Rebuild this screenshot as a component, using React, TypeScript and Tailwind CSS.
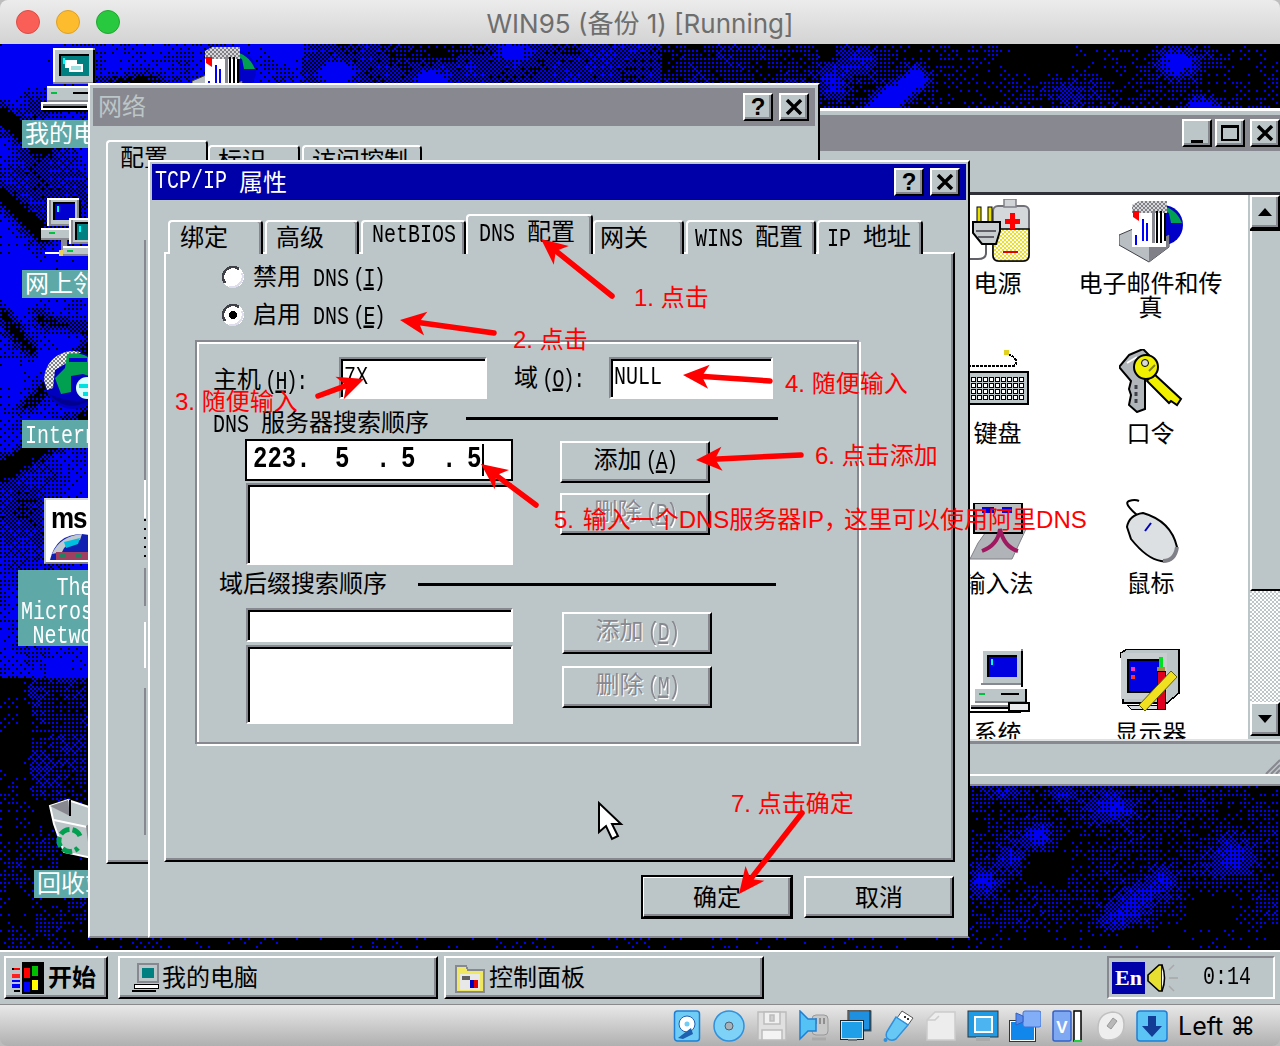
import React from "react";

type P = [number, number, number, number, string];
const G = "#bcc5c7", D = "#888890", K = "#000000", W = "#ffffff";

const Pix = ({ w, h, px = 2, data, extra }: { w: number; h: number; px?: number; data: P[]; extra?: React.ReactNode }) => (
  <svg width={w * px} height={h * px} viewBox={`0 0 ${w} ${h}`} shapeRendering="crispEdges" className="block shrink-0">
    {data.map((r, i) => (
      <rect key={i} x={r[0]} y={r[1]} width={r[2]} height={r[3]} fill={r[4]} />
    ))}
    {extra}
  </svg>
);

const pcData = (scr: string): P[] => [
  [6, 0, 21, 18, D], [6, 0, 20, 17, W], [7, 1, 19, 16, G], [9, 3, 15, 11, K], [10, 4, 14, 10, scr], [11, 5, 1, 3, "#00ffff"],
  [26, 1, 1, 18, K], [3, 19, 25, 8, G], [3, 19, 25, 1, W], [3, 26, 25, 1, D], [28, 20, 1, 7, K], [5, 22, 3, 1, "#00c040"], [16, 22, 9, 1, K],
  [0, 27, 25, 4, W], [1, 28, 22, 1, D], [1, 29, 22, 1, K], [0, 31, 26, 1, K],
];

const Computer = () => (
  <Pix w={32} h={32} data={[...pcData("#008080"), [12, 6, 6, 4, W], [14, 8, 7, 4, W], [15, 9, 5, 2, "#a0e0e0"]]} />
);

const Network = () => (
  <Pix
    w={32}
    h={30}
    data={[
      [3, 0, 16, 14, W], [4, 1, 15, 13, D], [5, 1, 13, 12, G], [6, 2, 11, 9, K], [7, 3, 10, 8, "#0000d0"], [8, 4, 1, 3, "#00ffff"], [19, 1, 1, 13, K],
      [0, 15, 17, 6, G], [0, 15, 17, 1, W], [0, 20, 17, 1, D], [4, 17, 3, 1, "#00c040"],
      [10, 21, 3, 5, D], [9, 26, 4, 3, "#e8d060"], [2, 27, 7, 1, W], [13, 27, 2, 1, W],
      [14, 10, 17, 13, W], [15, 11, 16, 12, D], [16, 11, 15, 11, G], [17, 12, 13, 9, K], [18, 13, 12, 8, "#008080"], [19, 14, 1, 3, "#00ffff"],
      [11, 24, 21, 5, G], [11, 24, 21, 1, W], [11, 28, 21, 1, D], [13, 26, 3, 1, "#00c040"],
    ]}
  />
);

const Globe = () => (
  <svg width="64" height="64" viewBox="0 0 64 64" className="block shrink-0">
    <defs>
      <pattern id="gdith" width="4" height="4" patternUnits="userSpaceOnUse">
        <rect width="4" height="4" fill="#f0f0f0" />
        <rect width="2" height="2" fill="#808088" />
        <rect x="2" y="2" width="2" height="2" fill="#808088" />
      </pattern>
    </defs>
    <circle cx="32" cy="32" r="29" fill="#0000c0" />
    <path d="M3 32 A29 29 0 0 1 32 3 L40 4 L24 16 L14 22 L12 40 L6 42 Z" fill="url(#gdith)" />
    <path d="M26 6 Q46 2 58 20 L54 30 L42 26 L30 28 L30 44 L20 46 L14 30 L24 20 Z" fill="#00a050" />
    <path d="M28 10 H46 V14 H28 Z" fill="#0000d8" />
    <circle cx="46" cy="40" r="11" fill="#d8ffff" />
    <path d="M38 36 H56 V40 H38 Z M42 44 H54 V48 H42 Z" fill="#00e0e0" />
    <path d="M8 46 Q30 70 56 46 Q40 60 8 46 Z" fill="#000090" />
  </svg>
);

const Msn = () => (
  <div className="relative w-[58px] h-[66px] shrink-0 bg-white border-2 border-t-[#d8dcde] border-l-[#bcc5c7] border-b-[#808088] overflow-hidden">
    <div className="absolute left-[5px] top-[3px] text-[26px] leading-[30px] font-bold font-['Liberation_Sans',sans-serif] text-black tracking-[-1px] inline-block scale-y-[1.15]">
      ms<span className="text-[#ff0000]">n</span>
    </div>
    <svg width="56" height="32" viewBox="0 0 56 32" className="absolute left-0 bottom-0">
      <path d="M4 30 Q10 4 36 4 Q50 4 56 20 V30 Z" fill="#1020b0" />
      <path d="M6 24 Q14 6 36 4 L34 10 Q20 12 16 22 Z" fill="#c0c8d0" />
      <path d="M18 12 L34 8 L32 14 L20 18 Z" fill="#00c0e0" />
      <rect x="10" y="22" width="46" height="8" fill="#a04060" />
      <rect x="14" y="24" width="6" height="4" fill="#208060" />
      <rect x="30" y="24" width="6" height="4" fill="#208060" />
    </svg>
  </div>
);

const Bin = () => (
  <svg width="50" height="60" viewBox="0 0 50 60" className="block shrink-0">
    <path d="M2 8 L20 2 L44 10 L44 60 L16 54 L6 26 Z" fill="#bcc5c7" stroke="#fff" strokeWidth="2" />
    <path d="M20 2 L22 18 L2 8 Z" fill="#888890" />
    <path d="M22 2 V18" stroke="#000" strokeWidth="2" />
    <path d="M6 22 L44 30" stroke="#fff" strokeWidth="2" />
    <path d="M32 38 A11 11 0 1 0 30 50" fill="none" stroke="#00a050" strokeWidth="5" strokeDasharray="10 3" />
    <path d="M38 28 L42 60 H50 V20 Z" fill="#888890" />
  </svg>
);

const Inbox = () => (
  <svg width="64" height="64" viewBox="0 0 64 64" className="block shrink-0">
    <defs>
      <pattern id="idith" width="4" height="4" patternUnits="userSpaceOnUse">
        <rect width="4" height="4" fill="#d8d8d8" />
        <rect width="2" height="2" fill="#808088" />
        <rect x="2" y="2" width="2" height="2" fill="#808088" />
      </pattern>
    </defs>
    <circle cx="44" cy="26" r="20" fill="#0000c8" />
    <path d="M34 8 Q54 4 63 24 L52 24 L50 14 Z" fill="#00a050" />
    <path d="M0 36 L14 30 V46 H30 L50 36 V48 L30 63 L0 46 Z" fill="#b8bec2" stroke="#404048" strokeWidth="1" />
    <path d="M30 63 L50 48 V36 L30 46 Z" fill="#808088" />
    <rect x="13" y="6" width="34" height="42" fill="#fff" />
    <path d="M13 6 L20 2 H48 V14 H13 Z" fill="url(#idith)" />
    <path d="M14 12 H20 V22 L14 18 Z" fill="#ff0000" />
    <rect x="16" y="36" width="2" height="10" fill="#0000ff" />
    <rect x="23" y="20" width="2" height="22" fill="#0000ff" />
    <rect x="27" y="24" width="2" height="18" fill="#0000ff" />
    <rect x="33" y="12" width="3" height="32" fill="#888890" />
    <rect x="37" y="12" width="2" height="32" fill="#000" />
    <rect x="41" y="12" width="2" height="32" fill="#000" />
    <rect x="45" y="14" width="2" height="28" fill="#000" />
  </svg>
);

const Power = () => (
  <svg width="64" height="64" viewBox="0 0 64 64" className="block shrink-0">
    <defs>
      <pattern id="pdith" width="4" height="4" patternUnits="userSpaceOnUse">
        <rect width="4" height="4" fill="#fff" />
        <rect width="2" height="2" fill="#ecdf20" />
        <rect x="2" y="2" width="2" height="2" fill="#ecdf20" />
      </pattern>
    </defs>
    <rect x="25" y="7" width="36" height="55" rx="5" fill="#d4d8da" stroke="#707078" strokeWidth="2" />
    <rect x="36" y="0" width="12" height="8" fill="#d0d4d6" stroke="#808088" strokeWidth="1.5" />
    <path d="M25 30 H61 V56 Q61 62 55 62 H31 Q25 62 25 56 Z" fill="url(#pdith)" stroke="#000" strokeWidth="1.5" />
    <rect x="42" y="14" width="5" height="16" fill="#ff0000" />
    <rect x="37" y="20" width="15" height="5" fill="#ff0000" />
    <rect x="35" y="52" width="15" height="2" fill="#e00000" />
    <rect x="9" y="8" width="4" height="15" fill="#e8e000" stroke="#000" strokeWidth="1" />
    <rect x="20" y="8" width="4" height="15" fill="#e8e000" stroke="#000" strokeWidth="1" />
    <path d="M5 23 H32 V32 L28 45 H14 L5 34 Z" fill="#c8ced0" stroke="#000" strokeWidth="2" />
    <path d="M8 32 H28 M10 38 H26" stroke="#606068" strokeWidth="2" />
    <path d="M18 46 V54 Q18 60 10 60 H0" fill="none" stroke="#606068" strokeWidth="2" />
  </svg>
);

const Keyboard = () => (
  <svg width="64" height="60" viewBox="0 0 64 60" shapeRendering="crispEdges" className="block shrink-0">
    <path d="M0 16 H44 Q50 16 48 10 Q44 4 38 4" fill="none" stroke="#000" strokeWidth="2" strokeDasharray="3 1" />
    <rect x="36" y="0" width="5" height="5" fill="#e0d020" />
    <rect x="0" y="22" width="60" height="32" fill="#bcc5c7" stroke="#000" strokeWidth="2" />
    {[0, 1, 2, 3].map((r) =>
      [0, 1, 2, 3, 4, 5, 6, 7, 8].map((c) => <rect key={`${r}${c}`} x={3 + c * 6} y={27 + r * 6} width="4" height="4" fill="#fff" stroke="#000" strokeWidth="1" />)
    )}
  </svg>
);

const Keys = () => (
  <svg width="64" height="64" viewBox="0 0 64 64" className="block shrink-0">
    <path d="M10 6 L24 0 L30 6 L26 30 L26 60 L18 63 L10 56 L12 46 L10 40 L12 32 L0 18 Z" fill="#b0b6ba" stroke="#000" strokeWidth="2" />
    <path d="M8 14 L18 8" stroke="#fff" strokeWidth="2" />
    <path d="M17 36 V56" stroke="#404048" strokeWidth="3" strokeDasharray="4 3" />
    <path d="M34 24 L62 50 L58 56 L52 52 L50 54 L28 32 Z" fill="#f0f000" stroke="#000" strokeWidth="2" />
    <circle cx="27" cy="18" r="12" fill="#f0f000" stroke="#000" strokeWidth="2" />
    <circle cx="26" cy="14" r="3.5" fill="#d8d8d8" stroke="#000" />
    <path d="M30 22 L36 16" stroke="#808020" strokeWidth="2" />
  </svg>
);

const Ime = () => (
  <svg width="64" height="64" viewBox="0 0 64 64" className="block shrink-0">
    <path d="M10 40 L20 26 H58 L44 56 H2 Z" fill="#b0b4b8" stroke="#808088" />
    <rect x="6" y="0" width="48" height="30" fill="#b8bec0" stroke="#000" strokeWidth="2" />
    <rect x="14" y="4" width="12" height="6" fill="#0000e0" />
    <rect x="34" y="4" width="10" height="6" fill="#0000e0" />
    <path d="M14 48 Q30 42 32 26 Q36 44 50 48" fill="none" stroke="#a01860" strokeWidth="4" />
  </svg>
);

const Mouse = () => (
  <svg width="64" height="66" viewBox="0 0 64 66" className="block shrink-0">
    <path d="M18 16 Q4 4 10 2 Q16 0 20 2" fill="none" stroke="#000" strokeWidth="2" />
    <path d="M8 28 Q10 16 24 14 Q52 22 58 48 Q56 64 42 62 Q28 60 12 40 Z" fill="#dce0e2" stroke="#000" strokeWidth="2" />
    <path d="M44 62 Q56 62 58 48" fill="none" stroke="#808088" strokeWidth="4" />
    <path d="M26 32 L32 24" stroke="#0000c0" strokeWidth="2" />
  </svg>
);

const Display = () => (
  <svg width="64" height="64" viewBox="0 0 64 64" shapeRendering="crispEdges" className="block shrink-0">
    <path d="M2 4 L8 0 H60 V44 L48 54 H4 V44 Z" fill="#bcc5c7" stroke="#000" strokeWidth="1.5" />
    <rect x="2" y="4" width="46" height="46" fill="#c8ced0" />
    <rect x="8" y="10" width="36" height="34" fill="#000" />
    <rect x="10" y="12" width="34" height="30" fill="#0000e0" />
    <rect x="12" y="18" width="4" height="4" fill="#ff30c0" />
    <rect x="12" y="26" width="4" height="4" fill="#ff3030" />
    <rect x="40" y="8" width="4" height="10" fill="#00e020" />
    <rect x="38" y="18" width="8" height="6" fill="#a09040" />
    <path d="M8 56 H44 V60 H12 Z" fill="#d8dcde" stroke="#000" />
    <rect x="38" y="22" width="8" height="38" fill="#e00020" stroke="#000" />
    <path d="M20 56 L52 22 L58 28 L26 62 Z" fill="#f0e020" stroke="#606000" shapeRendering="auto" />
  </svg>
);

const SysPc = () => (
  <svg width="64" height="64" viewBox="0 0 32 32" shapeRendering="crispEdges" className="block shrink-0">
    {pcData("#0000e0").map((r, i) => (
      <rect key={i} x={r[0]} y={r[1]} width={r[2]} height={r[3]} fill={r[4]} />
    ))}
    <rect x="20" y="27" width="10" height="4" fill="#e8eaec" stroke="#000" strokeWidth="0.6" />
  </svg>
);

const Tiny = () => (
  <svg width="32" height="32" viewBox="0 0 16 16" shapeRendering="crispEdges" className="block shrink-0">
    <rect x="4" y="1" width="10" height="9" fill={G} stroke={D} strokeWidth="1" />
    <rect x="6" y="3" width="6" height="5" fill="#008080" />
    <rect x="2" y="11" width="12" height="2" fill={W} stroke={K} strokeWidth="0.5" />
    <rect x="1" y="14" width="12" height="1" fill={K} />
  </svg>
);

const TinyFolder = () => (
  <svg width="32" height="32" viewBox="0 0 16 16" shapeRendering="crispEdges" className="block shrink-0">
    <path d="M1 2 H6 L7 4 H15 V15 H1 Z" fill="#f0e860" stroke="#888890" />
    <rect x="3" y="6" width="10" height="8" fill="#e8e8e8" />
    <rect x="8" y="9" width="2" height="4" fill="#0000c0" />
    <rect x="10" y="9" width="2" height="4" fill="#e00000" />
    <rect x="4" y="7" width="4" height="2" fill="#606060" />
  </svg>
);

const WinLogo = () => (
  <Pix
    w={16}
    h={16}
    data={[
      [0, 3, 1, 1, K], [1, 3, 3, 1, "#ff0000"], [0, 6, 4, 2, "#ff2020"], [0, 9, 4, 1, "#0000ff"], [0, 11, 4, 2, "#0000ff"], [1, 14, 3, 1, K],
      [5, 0, 11, 16, K], [6, 3, 3, 5, "#ff0000"], [10, 2, 3, 5, "#00c000"], [6, 10, 3, 5, "#0000ff"], [10, 9, 3, 5, "#ffff00"],
    ]}
  />
);

const Speaker = () => (
  <svg width="32" height="32" viewBox="0 0 32 32" className="block shrink-0">
    <path d="M1 13 L12 3 H15 V29 H12 L1 19 Z" fill="#e8e030" stroke="#000" strokeWidth="1.6" />
    <path d="M15 3 Q20 16 15 29" fill="#fff" stroke="#000" strokeWidth="1.6" />
    <path d="M22 8 L27 3 M22 16 H31 M22 24 L27 29" stroke="#a8a8a8" strokeWidth="1.5" />
  </svg>
);

const VHdd = () => (
  <svg width="32" height="32" viewBox="0 0 32 32"><rect x="3.5" y="1" width="25" height="30" rx="3" fill="#6fccf5" stroke="#1f7fd4" strokeWidth="1.5" /><circle cx="16" cy="14" r="8" fill="#fff" stroke="#1f60b0" strokeWidth="1" /><circle cx="16" cy="14" r="2.5" fill="#6fccf5" /><path d="M7 28 L20 18 L22 24 L12 29 Z" fill="#1f60b0" /></svg>
);
const VCd = () => (
  <svg width="32" height="32" viewBox="0 0 32 32"><circle cx="16" cy="16" r="15" fill="#7ed2f7" stroke="#2f90dc" strokeWidth="1.5" /><circle cx="16" cy="16" r="4" fill="#a8b0b8" stroke="#506070" /></svg>
);
const VFloppy = () => (
  <svg width="32" height="32" viewBox="0 0 32 32" fill="#e0e0e0" stroke="#bcbcbc" strokeWidth="1.5"><path d="M2 2 H30 V30 H2 Z" /><rect x="8" y="2" width="16" height="12" fill="#f0f0f0" /><rect x="14" y="5" width="4" height="6" fill="#cfcfcf" /><rect x="6" y="20" width="20" height="10" fill="#f4f4f4" /></svg>
);
const VAudio = () => (
  <svg width="32" height="32" viewBox="0 0 32 32"><rect x="14" y="5" width="16" height="20" rx="4" fill="#c8c8c8" stroke="#999" /><path d="M18 8 v6 M22 8 v6 M26 8 v6" stroke="#777" strokeWidth="1.4" /><path d="M14 29 H28" stroke="#aaa" strokeWidth="3" /><path d="M2 1 L10 9 H18 V21 H10 L2 29 Z" fill="#54c2f5" stroke="#1f7fd4" strokeWidth="1.5" /></svg>
);
const VNet = () => (
  <svg width="32" height="32" viewBox="0 0 32 32"><rect x="9" y="1" width="22" height="20" fill="#1f8fe0" stroke="#555" strokeWidth="1" /><rect x="8" y="0" width="22" height="20" fill="none" stroke="#222" strokeWidth="1" /><rect x="1" y="11" width="22" height="18" fill="#1f9fe8" stroke="#fff" strokeWidth="1.5" /><rect x="0.5" y="10.5" width="23" height="19" fill="none" stroke="#222" strokeWidth="1" /><path d="M8 29 V31 H17 V29" fill="#777" /></svg>
);
const VUsb = () => (
  <svg width="32" height="32" viewBox="0 0 32 32"><path d="M20 1 L31 8 L26 15 L15 8 Z" fill="#fff" stroke="#555" /><rect x="22" y="6" width="2" height="2" fill="#333" /><rect x="25" y="8" width="2" height="2" fill="#333" /><path d="M14 7 L26 15 L14 29 Q9 32 5 28 Q3 24 6 20 Z" fill="#67c8f5" stroke="#2f90dc" strokeWidth="1.5" /><circle cx="3.5" cy="30" r="2" fill="#2f90dc" /></svg>
);
const VFolder = () => (
  <svg width="32" height="32" viewBox="0 0 32 32" fill="#ededed" stroke="#cccccc" strokeWidth="1.5"><path d="M2 10 L10 2 H30 V30 H2 Z" /><path d="M2 10 H10 L14 6" fill="none" /></svg>
);
const VDisplay = () => (
  <svg width="32" height="32" viewBox="0 0 32 32"><rect x="1" y="1" width="30" height="26" fill="#1f9be6" stroke="#333" strokeWidth="1" /><rect x="8" y="7" width="17" height="15" fill="#4cb4f0" stroke="#fff" strokeWidth="2" /><path d="M9 27 V31 H23 V27" fill="#aaa" /></svg>
);
const VCapture = () => (
  <svg width="32" height="32" viewBox="0 0 32 32"><rect x="1" y="11" width="25" height="20" fill="#1187ec" stroke="#fff" strokeWidth="2" /><rect x="0.5" y="10.5" width="26" height="21" fill="none" stroke="#333" strokeWidth="1" /><rect x="14" y="1" width="18" height="16" rx="2" fill="#82aef7" stroke="#3f73d8" /><path d="M14 6 L7 3 V15 L14 12 Z" fill="#5a8ae8" stroke="#3060c8" /></svg>
);
const VCpu = () => (
  <svg width="32" height="32" viewBox="0 0 32 32"><rect x="1" y="1" width="18" height="30" rx="2" fill="#7fa8f2" stroke="#3560c8" strokeWidth="1.5" /><text x="10" y="23" textAnchor="middle" fontSize="17" fontWeight="700" fill="#fff" fontFamily="Liberation Sans">V</text><rect x="22" y="1" width="7" height="30" fill="#fff" stroke="#000" strokeWidth="1.5" /><rect x="22" y="30" width="8" height="2" fill="#20d040" /></svg>
);
const VMouse = () => (
  <svg width="32" height="32" viewBox="0 0 32 32"><path d="M4 18 Q4 4 18 2 Q30 2 30 14 Q30 30 14 30 Q4 30 4 18 Z" fill="#eeeeee" stroke="#c0c0c0" strokeWidth="1.5" /><path d="M19 8 L23 11 L17 19 L13 16 Z" fill="#b8b8b8" stroke="#999" /></svg>
);
const VArrow = () => (
  <svg width="32" height="32" viewBox="0 0 32 32"><rect x="1" y="1" width="30" height="30" rx="3" fill="#5cc4f5" stroke="#1f7fd4" strokeWidth="1.5" /><path d="M12 6 H20 V16 H26 L16 27 L6 16 H12 Z" fill="#123c96" /></svg>
);

/* wallpaper: an ordered dither over a darkness map */
const g = (x: number, y: number, cx: number, cy: number, rx: number, ry: number, a: number) =>
  a * Math.exp(-(((x - cx) * (x - cx)) / (rx * rx) + ((y - cy) * (y - cy)) / (ry * ry)));

const streak = (x: number, y: number, x0: number, y0: number, x1: number, y1: number, w: number, a: number) => {
  const dx = x1 - x0, dy = y1 - y0;
  const t = Math.max(0, Math.min(1, ((x - x0) * dx + (y - y0) * dy) / (dx * dx + dy * dy)));
  const px = x0 + t * dx - x, py = y0 + t * dy - y;
  return a * Math.exp(-(px * px + py * py) / (w * w));
};

const darkness = (x: number, y: number) => {
  const wob = 0.07 * Math.sin(x / 19 + y / 13) + 0.05 * Math.sin(x / 7 - y / 11);
  if (y >= 678 && x < 100) {
    let d = (x < 30 ? 0.92 : 0.68) + wob;
    if (y > 800) d = 0.84 + wob;
    return d;
  }
  if (y >= 930) return 0.9 + wob * 0.5;
  if (x >= 820 && y < 112) {
    let d = 0.84 + wob * 0.6;
    d -= streak(x, y, 875, 108, 915, 78, 11, 1.1);
    d -= g(x, y, 860, 62, 28, 18, 0.45);
    d -= g(x, y, 832, 85, 16, 18, 0.55);
    d -= g(x, y, 1177, 62, 22, 14, 0.85);
    d -= g(x, y, 1202, 106, 16, 9, 1.0);
    d -= g(x, y, 1075, 92, 30, 16, 0.35);
    d += g(x, y, 1050, 58, 30, 18, 0.3);
    d += x < 836 && y < 62 ? 0.3 : 0;
    return d;
  }
  if (x >= 900 && y >= 740) {
    let d = 0.78 + wob * 0.6;
    d -= g(x, y, 1110, 806, 24, 16, 0.6);
    d -= g(x, y, 1036, 836, 14, 12, 0.65);
    d -= g(x, y, 1010, 860, 14, 14, 0.45);
    d -= g(x, y, 983, 882, 14, 14, 0.6);
    d -= streak(x, y, 1115, 915, 1160, 880, 16, 0.45);
    d -= g(x, y, 1230, 858, 24, 20, 0.45);
    d -= g(x, y, 1005, 792, 20, 8, 0.4);
    d -= g(x, y, 1060, 792, 14, 8, 0.4);
    d += g(x, y, 1048, 868, 22, 14, 0.4);
    d += g(x, y, 1212, 920, 24, 24, 0.4);
    return d;
  }
  if (y < 90 && x >= 90) {
    let d = 0.2 + wob;
    if (x > 300) d = 0.5 + wob;
    if (x > 660) d = 0.72 + wob;
    d += g(x, y, 130, 82, 40, 8, 0.7);
    d += g(x, y, 430, 50, 60, 10, 0.3);
    d -= g(x, y, 335, 72, 14, 9, 0.9);
    d -= g(x, y, 430, 80, 14, 8, 0.9);
    d -= g(x, y, 515, 52, 16, 8, 0.6);
    d -= g(x, y, 290, 50, 18, 8, 0.7);
    return d;
  }
  let d = 0.14 + wob;
  d -= g(x, y, 20, 70, 30, 30, 0.4);
  d += streak(x, y, 0, 115, 42, 145, 11, 1.0);
  d += g(x, y, 40, 105, 22, 18, 0.5);
  d += g(x, y, 50, 190, 45, 40, 0.45);
  d += streak(x, y, 0, 195, 45, 235, 8, 0.9);
  d += streak(x, y, 40, 318, 88, 330, 8, 0.5);
  d += streak(x, y, 0, 310, 30, 350, 8, 0.7);
  d += streak(x, y, 25, 405, 88, 345, 7, 0.6);
  d += streak(x, y, 0, 470, 88, 418, 12, 1.0);
  d += g(x, y, 25, 520, 35, 45, 0.45);
  d += g(x, y, 60, 620, 60, 40, 0.12);
  d -= g(x, y, 15, 275, 22, 22, 0.4);
  return d;
};

const rnd = (x: number, y: number) => {
  const s = Math.sin(x * 12.9898 + y * 78.233) * 43758.5453;
  return s - Math.floor(s);
};
const bayer = [0, 8, 2, 10, 12, 4, 14, 6, 3, 11, 1, 9, 15, 7, 13, 5];

const buildDither = () => {
  const regions = [
    [0, 0, 90, 906],
    [90, 0, 730, 42],
    [818, 0, 462, 68],
    [968, 740, 312, 166],
    [90, 892, 880, 14],
  ];
  const parts: string[] = [];
  for (const [rx, ry, rw, rh] of regions) {
    for (let y = ry; y < ry + rh; y += 2) {
      for (let x = rx; x < rx + rw; x += 2) {
        const b = (bayer[((x / 2) & 3) + ((y / 2) & 3) * 4] + 0.5) / 16;
        const t = b * 0.82 + rnd(x, y) * 0.18;
        if (darkness(x, y + 44) > t) parts.push(`M${x} ${y}h2v2h-2z`);
      }
    }
  }
  return parts.join("");
};
const ditherPath = buildDither();

const Wallpaper = () => (
  <svg width="1280" height="906" viewBox="0 0 1280 906" shapeRendering="crispEdges" className="absolute inset-0">
    <rect width="1280" height="906" fill="#0000f4" />
    <path d={ditherPath} fill="#000" />
  </svg>
);

const L = ({ children, className = "" }: { children: React.ReactNode; className?: string }) => (
  <span className={`inline-block scale-y-[1.25] font-['Liberation_Mono',monospace] text-[20px] ${className}`}>{children}</span>
);
/* narrow parenthesised access key, as in "(I)" */
const Acc = ({ k }: { k: string }) => (
  <L className="tracking-[-1.6px] ml-[4px]">(<u>{k}</u>)</L>
);

const raised = "border-2 border-t-white border-l-white border-r-black border-b-black shadow-[inset_-2px_-2px_0_#888890]";
const sunken = "border-2 border-t-[#888890] border-l-[#888890] border-r-white border-b-white shadow-[inset_2px_2px_0_#000] bg-white";

const Btn = ({ children, disabled, def, className = "" }: { children: React.ReactNode; disabled?: boolean; def?: boolean; className?: string }) => (
  <div
    className={`flex items-center justify-center h-[42px] w-[150px] pb-[3px] bg-[#bcc5c7] ${raised} ${def ? "outline-2 outline-black -outline-offset-1" : ""} ${
      disabled ? "text-[#888890] [text-shadow:1px_1px_0_#fff]" : "text-black"
    } ${className}`}
  >
    {children}
  </div>
);

const TitleBtn = ({ children, className = "" }: { children: React.ReactNode; className?: string }) => (
  <div className={`flex items-center justify-center w-[30px] h-[28px] bg-[#bcc5c7] ${raised} text-black font-bold font-['Liberation_Sans',sans-serif] text-[24px] leading-none ${className}`}>
    {children}
  </div>
);

const XGlyph = () => (
  <svg width="18" height="16" viewBox="0 0 18 16"><path d="M2 1 L16 15 M16 1 L2 15" stroke="#000" strokeWidth="3.4" /></svg>
);

const Tab = ({ w, active, children, ml = 0, pl = 8 }: { w: number; active?: boolean; children: React.ReactNode; ml?: number; pl?: number }) => (
  <div
    style={{ width: w, marginLeft: ml, paddingLeft: pl }}
    className={`relative flex items-center justify-start whitespace-nowrap rounded-t-[4px] border-t-2 border-l-2 border-r-2 border-t-white border-l-white border-r-black shadow-[inset_-2px_0_0_#888890] bg-[#bcc5c7] text-black overflow-hidden ${
      active ? "h-[40px] z-10 pb-[8px]" : "h-[34px] pb-[4px]"
    }`}
  >
    {children}
  </div>
);

const Radio = ({ on }: { on?: boolean }) => (
  <div className="relative w-[24px] h-[24px] shrink-0">
    <svg width="24" height="24" viewBox="0 0 24 24" shapeRendering="crispEdges">
      <circle cx="12" cy="12" r="11" fill="#fff" />
      <path d="M4 18 A10 10 0 0 1 18 4" fill="none" stroke="#404048" strokeWidth="2.5" />
      <path d="M21 8 A10.5 10.5 0 0 1 8 21.5" fill="none" stroke="#dde" strokeWidth="2" />
      {on && <circle cx="12" cy="12" r="4" fill="#000" />}
    </svg>
  </div>
);

const Arrow = ({ x1, y1, x2, y2 }: { x1: number; y1: number; x2: number; y2: number }) => {
  const a = Math.atan2(y2 - y1, x2 - x1);
  const ux = Math.cos(a), uy = Math.sin(a);
  const bx = x2 - ux * 26, by = y2 - uy * 26;
  const nx = x2 - ux * 19, ny = y2 - uy * 19;
  const pts = [
    `${x2},${y2}`,
    `${bx - uy * 12},${by + ux * 12}`,
    `${nx},${ny}`,
    `${bx + uy * 12},${by - ux * 12}`,
  ].join(" ");
  return (
    <g>
      <line x1={x1} y1={y1} x2={nx + ux * 2} y2={ny + uy * 2} stroke="#ff0000" strokeWidth="5.5" strokeLinecap="round" />
      <polygon points={pts} fill="#ff0000" />
    </g>
  );
};

const DeskItem = ({ left, top, icon, label, labelClass = "" }: { left: number; top: number; icon: React.ReactNode; label: React.ReactNode; labelClass?: string }) => (
  <div className="absolute flex flex-col items-center w-[110px]" style={{ left, top }}>
    <div className="h-[66px] flex items-start justify-center">{icon}</div>
    {label ? (
      <div className={`mt-[6px] h-[28px] bg-[#5fa8a8] text-white text-center leading-[24px] whitespace-nowrap ${labelClass}`}>{label}</div>
    ) : null}
  </div>
);

const CpItem = ({ icon, label }: { icon: React.ReactNode; label: string }) => (
  <div className="flex flex-col items-center h-[150px] text-black leading-[24px]">
    <div className="h-[64px] flex items-start justify-center">{icon}</div>
    <div className="mt-[7px] w-[146px] text-center">{label}</div>
  </div>
);

const ScrollBtn = ({ up }: { up?: boolean }) => (
  <div className={`h-[34px] w-full flex items-center justify-center bg-[#bcc5c7] ${raised}`}>
    <svg width="14" height="8" viewBox="0 0 14 8">
      <path d={up ? "M7 0 L14 8 H0 Z" : "M7 8 L14 0 H0 Z"} fill="#000" />
    </svg>
  </div>
);

const NetworkWindow = () => (
  <div className="absolute left-[88px] top-[39px] w-[732px] h-[855px] bg-[#bcc5c7] border-2 border-t-white border-l-white border-r-black border-b-[#888890] flex flex-col p-[3px] overflow-hidden">
    <div className="h-[38px] shrink-0 bg-[#888890] flex items-center pl-[5px] pr-[6px] text-[#bcc5c7]">
      <span className="pb-[5px]">网络</span>
      <div className="ml-auto flex gap-[6px]">
        <TitleBtn>?</TitleBtn>
        <TitleBtn><XGlyph /></TitleBtn>
      </div>
    </div>
    <div className="flex items-start mt-[14px] ml-[13px] h-[22px] overflow-visible shrink-0 leading-[24px]">
      <div className="w-[102px] h-[40px] shrink-0 rounded-t-[4px] border-t-2 border-l-2 border-r-2 border-white border-r-black pl-[12px] pt-[2px] text-black">配置</div>
      <div className="w-[92px] h-[36px] mt-[5px] shrink-0 rounded-t-[4px] border-t-2 border-l-2 border-r-2 border-white border-r-black pl-[8px] text-black">标识</div>
      <div className="w-[120px] h-[36px] mt-[5px] ml-[2px] shrink-0 rounded-t-[4px] border-t-2 border-l-2 border-r-2 border-white border-r-black pl-[8px] text-black">访问控制</div>
    </div>
    <div className="ml-[13px] w-[690px] h-[702px] shrink-0 border-l-2 border-l-white border-b-2 border-b-black shadow-[inset_0_-2px_0_#888890]" />
    <div className="absolute left-[54px] top-[155px] w-[2px] h-[240px] bg-[#888890]" />
    <div className="absolute left-[54px] top-[395px] w-[2px] h-[38px] bg-white" />
    <div className="absolute left-[54px] top-[434px] w-[2px] h-[38px] bg-[linear-gradient(#000_2px,transparent_2px,transparent_8px)] bg-[length:2px_9px]" />
    <div className="absolute left-[54px] top-[483px] w-[2px] h-[38px] bg-[#888890]" />
    <div className="absolute left-[54px] top-[537px] w-[2px] h-[46px] bg-white" />
    <div className="absolute left-[54px] top-[603px] w-[2px] h-[147px] bg-[#888890]" />
  </div>
);

const ControlPanel = () => (
  <div className="absolute left-[600px] top-[64px] w-[700px] h-[678px] bg-[#bcc5c7] border-t-[3px] border-t-white border-b-[2px] border-b-[#888890] pt-[2px] flex flex-col overflow-hidden">
    <div className="h-[36px] mt-[2px] shrink-0 bg-[#888890] flex items-center justify-end pr-[20px] gap-[3px]">
      <TitleBtn className="items-end pb-[2px]"><div className="w-[12px] h-[3px] bg-black" /></TitleBtn>
      <TitleBtn className="mr-[2px]"><div className="w-[18px] h-[16px] border-2 border-t-[3px] border-black" /></TitleBtn>
      <TitleBtn><XGlyph /></TitleBtn>
    </div>
    <div className="h-[44px] shrink-0 border-b-[3px] border-b-[#303038]" />
    <div className="flex h-[544px] shrink-0 bg-white overflow-hidden">
      <div className="w-[648px] flex justify-end pr-[22px] pt-[4px] overflow-hidden">
        <div className="grid grid-cols-[151px_151px] gap-x-[2px] auto-rows-[150px] h-[540px]">
          <CpItem icon={<div className="ml-[4px]"><Power /></div>} label="电源" />
          <CpItem icon={<Inbox />} label="电子邮件和传真" />
          <CpItem icon={<div className="mt-[1px] ml-[4px]"><Keyboard /></div>} label="键盘" />
          <CpItem icon={<Keys />} label="口令" />
          <CpItem icon={<div className="mt-[4px] ml-[4px]"><Ime /></div>} label="输入法" />
          <CpItem icon={<Mouse />} label="鼠标" />
          <CpItem icon={<div className="ml-[6px]"><SysPc /></div>} label="系统" />
          <CpItem icon={<Display />} label="显示器" />
        </div>
      </div>
      <div className="w-[32px] shrink-0 flex flex-col bg-[#bcc5c7] border-l-2 border-l-[#bcc5c7]">
        <ScrollBtn up />
        <div className="h-[2px] bg-black" />
        <div className="h-[360px] border-b-2 border-b-black border-l-2 border-l-white shrink-0" />
        <div className="h-[111px] shrink-0 bg-[conic-gradient(#fff_25%,#bcc5c7_0_50%,#fff_0_75%,#bcc5c7_0)] bg-[length:4px_4px]" />
        <ScrollBtn />
      </div>
    </div>
    <div className="h-[2px] shrink-0 bg-[#dfe3e4]" />
    <div className="h-[3px] shrink-0 bg-[#888890]" />
    <div className="relative h-[32px] shrink-0 border-b-2 border-b-white">
      <svg width="16" height="16" viewBox="0 0 16 16" className="absolute left-[664px] top-[14px]">
        <path d="M16 2 L2 16 M16 7 L7 16 M16 12 L12 16" stroke="#888890" strokeWidth="2" />
      </svg>
    </div>
  </div>
);

const Dialog = () => (
  <div className="absolute left-[148px] top-[116px] w-[822px] h-[778px] bg-[#bcc5c7] border-2 border-t-white border-l-white border-r-black border-b-[#888890] flex flex-col p-[2px] z-10">
    <div className="h-[36px] shrink-0 bg-[#0000a8] flex items-center pl-[3px] pr-[6px] text-white">
      <L>TCP/IP</L>
      <span className="ml-[12px] pb-[3px]">属性</span>
      <div className="ml-auto flex gap-[6px]">
        <TitleBtn>?</TitleBtn>
        <TitleBtn><XGlyph /></TitleBtn>
      </div>
    </div>
    <div className="ml-[12px] mt-[14px] flex items-end h-[40px] -mb-[2px] relative z-10 shrink-0">
      <Tab w={95} ml={4} pl={10}>绑定</Tab>
      <Tab w={94} ml={2} pl={9}>高级</Tab>
      <Tab w={105} ml={2} pl={9}><L>NetBIOS</L></Tab>
      <Tab w={127} active pl={11}>
        <span><L>DNS</L><span className="ml-[12px]">配置</span></span>
      </Tab>
      <Tab w={91} pl={5}>网关</Tab>
      <Tab w={130} ml={2} pl={7}>
        <span><L>WINS</L><span className="ml-[12px]">配置</span></span>
      </Tab>
      <Tab w={106} ml={1} pl={8}>
        <span><L>IP</L><span className="ml-[12px]">地址</span></span>
      </Tab>
    </div>
    <div className="ml-[12px] w-[791px] h-[610px] shrink-0 border-2 border-t-white border-l-white border-r-black border-b-black shadow-[inset_-2px_-2px_0_#888890] text-black flex flex-col">
      <div className="ml-[55px] mt-[11px] h-[24px] flex items-center gap-[8px] leading-[24px]">
        <Radio />
        <span>禁用<L className="ml-[12px]">DNS</L><Acc k="I" /></span>
      </div>
      <div className="ml-[55px] mt-[14px] h-[24px] flex items-center gap-[8px] leading-[24px]">
        <Radio on />
        <span>启用<L className="ml-[12px]">DNS</L><Acc k="E" /></span>
      </div>
      <div className="ml-[29px] mt-[13px] w-[664px] h-[404px] border-2 border-[#888890] shadow-[inset_2px_2px_0_#fff,2px_2px_0_#fff] pl-[16px] pt-[15px] flex flex-col leading-[24px]">
        <div className="flex items-center h-[42px]">
          <span className="w-[126px] pt-[4px]">主机<Acc k="H" /><L>:</L></span>
          <div className={`w-[148px] h-[42px] ${sunken} pl-[3px] pt-[2px]`}><L className="leading-[24px]">7X</L></div>
          <span className="w-[95px] ml-[27px]">域<Acc k="O" /><L>:</L></span>
          <div className={`w-[164px] h-[42px] ${sunken} pl-[3px] pt-[2px]`}><L className="leading-[24px]">NULL</L></div>
        </div>
        <div className="flex h-[24px] mt-[10px]">
          <span className="w-[253px]"><L>DNS</L><span className="ml-[12px]">服务器搜索顺序</span></span>
          <div className="w-[312px] h-[3px] mt-[8px] bg-black" />
        </div>
        <div className="flex mt-[6px]">
          <div className="ml-[32px] w-[268px]">
            <div className="h-[42px] border-2 border-black bg-white flex items-center pl-[6px] font-['Liberation_Mono',monospace] text-[24px] font-bold leading-none">
              <span className="w-[82px] inline-block scale-y-[1.2] origin-center">223.</span>
              <span className="w-[41px] inline-block scale-y-[1.2]">5</span>
              <span className="w-[25px] inline-block scale-y-[1.2]">.</span>
              <span className="w-[41px] inline-block scale-y-[1.2]">5</span>
              <span className="w-[25px] inline-block scale-y-[1.2]">.</span>
              <span className="inline-block scale-y-[1.2]">5</span>
              <span className="ml-[1px] w-[2px] h-[32px] bg-black" />
            </div>
            <div className={`mt-[2px] ml-[1px] h-[82px] ${sunken}`} />
          </div>
          <div className="ml-[47px] pt-[2px] flex flex-col gap-[10px]">
            <Btn><span>添加<Acc k="A" /></span></Btn>
            <Btn disabled><span>删除<Acc k="R" /></span></Btn>
          </div>
        </div>
        <div className="flex h-[24px] mt-[5px] ml-[6px]">
          <span className="w-[199px]">域后缀搜索顺序</span>
          <div className="w-[358px] h-[3px] mt-[13px] bg-black" />
        </div>
        <div className="flex mt-[14px]">
          <div className="ml-[33px] w-[267px]">
            <div className={`h-[34px] ${sunken}`} />
            <div className={`mt-[3px] h-[79px] ${sunken}`} />
          </div>
          <div className="ml-[49px] pt-[4px] flex flex-col gap-[12px]">
            <Btn disabled><span>添加<Acc k="D" /></span></Btn>
            <Btn disabled><span>删除<Acc k="M" /></span></Btn>
          </div>
        </div>
      </div>
    </div>
    <div className="flex justify-end gap-[12px] mt-[14px] pr-[12px]">
      <Btn def>确定</Btn>
      <Btn>取消</Btn>
    </div>
  </div>
);

const Annotation = ({ x, y, children }: { x: number; y: number; children: React.ReactNode }) => (
  <div
    className="absolute z-30 text-[#ff0000] text-[24px] leading-[30px] whitespace-nowrap font-['Liberation_Sans','Noto_Sans_CJK_SC',sans-serif]"
    style={{ left: x, top: y - 14 }}
  >
    {children}
  </div>
);

export default function App() {
  return (
    <div className="relative w-[1280px] h-[1046px] overflow-hidden flex flex-col bg-[#bdbdbd] text-[24px] font-['Noto_Sans_CJK_SC',sans-serif]">
      <div className="h-[44px] shrink-0 rounded-t-[8px] bg-[linear-gradient(#ececec,#d3d3d3)] flex items-center justify-center relative">
        <div className="absolute left-[16px] top-[10px] flex gap-[16px]">
          <div className="w-[24px] h-[24px] rounded-full bg-[#fa5f57] border border-[#e04a42]" />
          <div className="w-[24px] h-[24px] rounded-full bg-[#fdbb2e] border border-[#e0a020]" />
          <div className="w-[24px] h-[24px] rounded-full bg-[#28c83f] border border-[#1fa830]" />
        </div>
        <span className="text-[#6e6e6e] text-[26px] pt-[2px] font-['Inter','Noto_Sans_CJK_SC',sans-serif]">WIN95 (备份 1) [Running]</span>
      </div>

      <div className="relative h-[906px] shrink-0 overflow-hidden">
        <Wallpaper />
        <DeskItem left={18} top={4} icon={<Computer />} label="我的电脑" labelClass="px-[3px]" />
        <DeskItem left={169} top={1} icon={<Inbox />} label="" />
        <DeskItem left={18} top={154} icon={<Network />} label="网上邻居" labelClass="px-[3px]" />
        <DeskItem left={18} top={304} icon={<Globe />} label={<L className="leading-[24px] px-[3px]">Internet</L>} />
        <div className="absolute left-[18px] top-[454px] w-[110px] flex flex-col items-center">
          <Msn />
          <div className="mt-[6px] w-[110px] h-[76px] bg-[#5fa8a8] text-white text-center pt-[2px] pl-[3px] leading-[24px]">
            <div className="h-[24px]"><L className="leading-[24px]">The</L></div>
            <div className="h-[24px]"><L className="leading-[24px]">Microsoft</L></div>
            <div className="h-[24px]"><L className="leading-[24px]">Network</L></div>
          </div>
        </div>
        <DeskItem left={18} top={754} icon={<Bin />} label="回收站" labelClass="px-[3px]" />
        <ControlPanel />
        <NetworkWindow />
        <Dialog />
      </div>

      <div className="h-[54px] shrink-0 bg-[#bcc5c7] border-t-[2px] border-t-white flex items-start pt-[4px] text-black leading-[24px]">
        <div className={`ml-[4px] w-[104px] h-[43px] flex items-center pl-[6px] ${raised}`}>
          <WinLogo />
          <span className="ml-[4px] font-bold pb-[3px]">开始</span>
        </div>
        <div className={`ml-[10px] w-[320px] h-[43px] flex items-center pl-[10px] ${raised}`}>
          <Tiny />
          <span className="pb-[3px]">我的电脑</span>
        </div>
        <div className={`ml-[6px] w-[320px] h-[43px] flex items-center pl-[8px] ${raised}`}>
          <TinyFolder />
          <span className="ml-[3px] pb-[3px]">控制面板</span>
        </div>
        <div className="ml-auto mr-[5px] w-[168px] h-[43px] border-2 border-t-[#888890] border-l-[#888890] border-r-white border-b-white flex items-center pl-[3px]">
          <div className="w-[33px] h-[32px] bg-[#0000a8] text-white flex items-center justify-center font-['Liberation_Serif',serif] font-bold text-[22px]">En</div>
          <div className="ml-[2px]"><Speaker /></div>
          <L className="ml-[24px]">0:14</L>
        </div>
      </div>

      <div className="h-[42px] shrink-0 border-t border-t-[#8a8a8a] rounded-b-[8px] bg-[linear-gradient(#e8e8e8,#b0b0b0)] flex items-center pl-[671px] gap-[10.3px] relative">
        <VHdd /><VCd /><VFloppy /><VAudio /><VNet /><VUsb /><VFolder /><VDisplay /><VCapture /><VCpu /><VMouse /><VArrow />
        <span className="absolute left-[1178px] top-[6px] text-[25px] leading-[30px] text-black font-['Inter','DejaVu_Sans',sans-serif]">Left ⌘</span>
      </div>

      <svg width="1280" height="1046" viewBox="0 0 1280 1046" className="absolute inset-0 z-20 pointer-events-none">
        <Arrow x1={612} y1={296} x2={541} y2={239} />
        <Arrow x1={494} y1={333} x2={400} y2={320} />
        <Arrow x1={318} y1={396} x2={364} y2={379} />
        <Arrow x1={770} y1={381} x2={683} y2={375} />
        <Arrow x1={536} y1={505} x2={481} y2={464} />
        <Arrow x1={801} y1={455} x2={696} y2={460} />
        <Arrow x1={802} y1={813} x2={739} y2={894} />
        <path d="M599 803 V832 L606 826 L612 839 L618 836 L612 824 L621 824 Z" fill="#fff" stroke="#000" strokeWidth="2" />
      </svg>

      <Annotation x={634} y={297}>1. 点击</Annotation>
      <Annotation x={513} y={339}>2. 点击</Annotation>
      <Annotation x={175} y={401}>3. 随便输入</Annotation>
      <Annotation x={785} y={383}>4. 随便输入</Annotation>
      <Annotation x={554} y={519}>
        5. <span className="ml-[2px]">输入一个DNS服务器IP，</span><span className="-ml-[4px]">这里可以使用阿里DNS</span>
      </Annotation>
      <Annotation x={815} y={455}>6. 点击添加</Annotation>
      <Annotation x={731} y={803}>7. 点击确定</Annotation>
    </div>
  );
}
